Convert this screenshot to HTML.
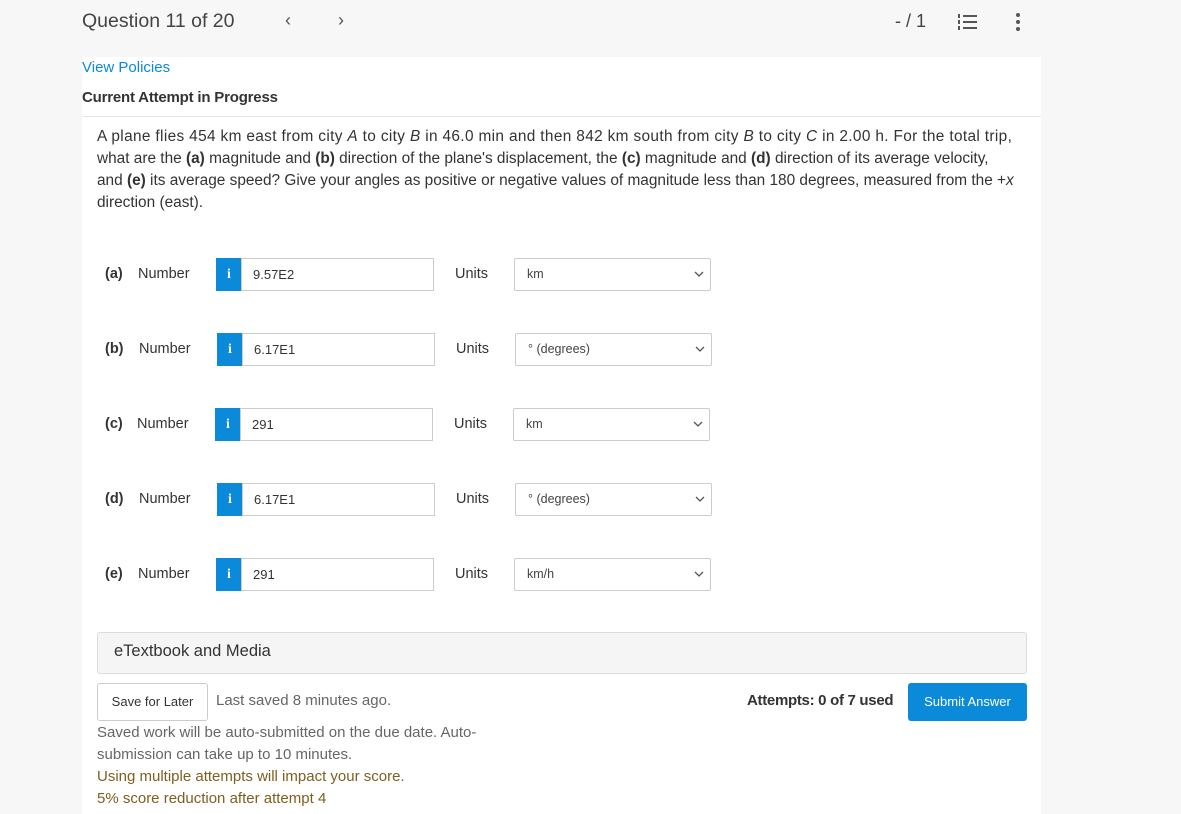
<!DOCTYPE html><html><head><style>
*{margin:0;padding:0;box-sizing:border-box}
body{width:1181px;height:814px;background:#f7f7f7;font-family:"Liberation Sans",sans-serif;color:#333;position:relative;overflow:hidden}
.a{position:absolute;white-space:nowrap}
.panel{position:absolute;left:82px;top:57px;width:959px;height:757px;background:#fff}
.q{position:absolute;left:97px;top:126px;width:940px;font-size:15.4px;line-height:22px;color:#333;white-space:nowrap}
.lbl{font-size:14.5px;color:#333}
.info{position:absolute;width:26px;height:33px;background:#0a8ad8;color:#fff;font-family:"Liberation Serif",serif;font-weight:bold;font-size:14px;text-align:center;line-height:33px}
.inp{position:absolute;height:33px;border:1px solid #ccc;font-size:13px;line-height:31px;padding-left:11px;color:#333}
.sel{position:absolute;width:197px;height:33px;border:1px solid #ccc;border-radius:2px;font-size:12.5px;line-height:31px;padding-left:12px;color:#444}
.sel svg{position:absolute;right:6px;top:12px}
</style></head><body>
<div class="a" style="left:82px;top:10px;font-size:19.5px;color:#444">Question 11 of 20</div>
<div class="a" style="left:285px;top:10px;font-size:18px;color:#555">&#8249;</div>
<div class="a" style="left:338px;top:10px;font-size:18px;color:#555">&#8250;</div>
<div class="a" style="left:895px;top:11px;font-size:18px;color:#444">- / 1</div>
<svg class="a" style="left:957px;top:13px" width="22" height="18"><g fill="#555"><rect x="6" y="2" width="14" height="2"/><rect x="6" y="8" width="14" height="2"/><rect x="6" y="14" width="14" height="2"/><rect x="1" y="1" width="2" height="4"/><rect x="1" y="7" width="2" height="4"/><rect x="1" y="13" width="2" height="4"/></g></svg>
<svg class="a" style="left:1015px;top:12px" width="6" height="20"><g fill="#555"><circle cx="3" cy="3" r="2"/><circle cx="3" cy="10" r="2"/><circle cx="3" cy="17" r="2"/></g></svg>
<div class="panel"></div>
<div class="a" style="left:82px;top:59px;font-size:15px;color:#0a8ad8">View Policies</div>
<div class="a" style="left:82px;top:89px;font-size:15px;font-weight:bold;color:#333;letter-spacing:-0.2px">Current Attempt in Progress</div>
<div class="a" style="left:82px;top:116px;width:959px;height:1px;background:#e6e6e6"></div>
<div class="q"><span style="letter-spacing:0.35px">A plane flies 454 km east from city <i>A</i> to city <i>B</i> in 46.0 min and then 842 km south from city <i>B</i> to city <i>C</i> in 2.00 h. For the total trip,</span><br>what are the <b>(a)</b> magnitude and <b>(b)</b> direction of the plane's displacement, the <b>(c)</b> magnitude and <b>(d)</b> direction of its average velocity,<br>and <b>(e)</b> its average speed? Give your angles as positive or negative values of magnitude less than 180 degrees, measured from the +<i>x</i><br>direction (east).</div>

<div class="a lbl" style="left:105px;top:266px"><b>(a)</b></div><div class="a lbl" style="left:138px;top:266px">Number</div>
<div class="info" style="left:216px;top:258px">i</div><div class="inp" style="left:241px;top:258px;width:193px">9.57E2</div>
<div class="a lbl" style="left:455px;top:266px">Units</div>
<div class="sel" style="left:514px;top:258px">km<svg width="10" height="7"><path d="M1 1l4 4 4-4" stroke="#555" fill="none" stroke-width="1.3"/></svg></div>

<div class="a lbl" style="left:105px;top:341px"><b>(b)</b></div><div class="a lbl" style="left:139px;top:341px">Number</div>
<div class="info" style="left:217px;top:333px">i</div><div class="inp" style="left:242px;top:333px;width:193px">6.17E1</div>
<div class="a lbl" style="left:456px;top:341px">Units</div>
<div class="sel" style="left:515px;top:333px">° (degrees)<svg width="10" height="7"><path d="M1 1l4 4 4-4" stroke="#555" fill="none" stroke-width="1.3"/></svg></div>

<div class="a lbl" style="left:105px;top:416px"><b>(c)</b></div><div class="a lbl" style="left:137px;top:416px">Number</div>
<div class="info" style="left:215px;top:408px">i</div><div class="inp" style="left:240px;top:408px;width:193px">291</div>
<div class="a lbl" style="left:454px;top:416px">Units</div>
<div class="sel" style="left:513px;top:408px">km<svg width="10" height="7"><path d="M1 1l4 4 4-4" stroke="#555" fill="none" stroke-width="1.3"/></svg></div>

<div class="a lbl" style="left:105px;top:491px"><b>(d)</b></div><div class="a lbl" style="left:139px;top:491px">Number</div>
<div class="info" style="left:217px;top:483px">i</div><div class="inp" style="left:242px;top:483px;width:193px">6.17E1</div>
<div class="a lbl" style="left:456px;top:491px">Units</div>
<div class="sel" style="left:515px;top:483px">° (degrees)<svg width="10" height="7"><path d="M1 1l4 4 4-4" stroke="#555" fill="none" stroke-width="1.3"/></svg></div>

<div class="a lbl" style="left:105px;top:566px"><b>(e)</b></div><div class="a lbl" style="left:138px;top:566px">Number</div>
<div class="info" style="left:216px;top:558px">i</div><div class="inp" style="left:241px;top:558px;width:193px">291</div>
<div class="a lbl" style="left:455px;top:566px">Units</div>
<div class="sel" style="left:514px;top:558px">km/h<svg width="10" height="7"><path d="M1 1l4 4 4-4" stroke="#555" fill="none" stroke-width="1.3"/></svg></div>

<div class="a" style="left:97px;top:632px;width:930px;height:42px;background:#f5f5f5;border:1px solid #ddd;border-radius:3px"></div>
<div class="a" style="left:114px;top:642px;font-size:16.5px;color:#333">eTextbook and Media</div>

<div class="a" style="left:97px;top:683px;width:111px;height:38px;border:1px solid #ccc;border-radius:3px;font-size:13px;line-height:36px;text-align:center;color:#333">Save for Later</div>
<div class="a" style="left:216px;top:692px;font-size:15px;color:#666">Last saved 8 minutes ago.</div>
<div class="a" style="left:97px;top:722px;font-size:15px;line-height:22px;color:#666">Saved work will be auto-submitted on the due date. Auto-<br>submission can take up to 10 minutes.</div>
<div class="a" style="left:97px;top:766px;font-size:15px;line-height:22px;color:#7d5f1f">Using multiple attempts will impact your score.<br>5% score reduction after attempt 4</div>
<div class="a" style="left:747px;top:692px;font-size:15px;font-weight:bold;color:#333;letter-spacing:-0.3px">Attempts: 0 of 7 used</div>
<div class="a" style="left:908px;top:683px;width:119px;height:38px;background:#0a8ad8;border-radius:3px;color:#fff;font-size:13px;line-height:38px;text-align:center">Submit Answer</div>
</body></html>
